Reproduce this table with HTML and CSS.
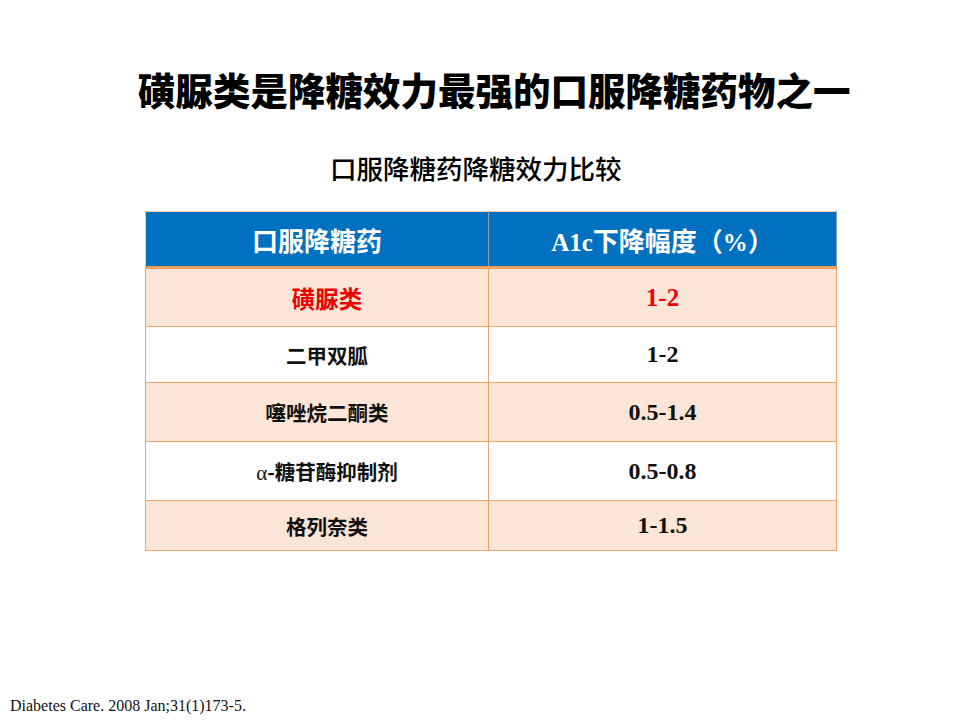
FILE: index.html
```html
<!DOCTYPE html>
<html lang="zh-CN">
<head>
<meta charset="utf-8">
<title>磺脲类是降糖效力最强的口服降糖药物之一</title>
<link rel="stylesheet" href="styles.css">
</head>
<body>
<div class="slide">
  <h1 class="title">磺脲类是降糖效力最强的口服降糖药物之一</h1>
  <h2 class="subtitle">口服降糖药降糖效力比较</h2>
  <table class="cmp">
    <thead>
      <tr class="head">
        <th class="c1">口服降糖药</th>
        <th class="c2"><span class="lat">A1c</span>下降幅度（<span class="lat">%</span>）</th>
      </tr>
    </thead>
    <tbody>
      <tr class="odd r1 hl">
        <td class="cn">磺脲类</td>
        <td class="num">1-2</td>
      </tr>
      <tr class="even r2">
        <td class="cn">二甲双胍</td>
        <td class="num">1-2</td>
      </tr>
      <tr class="odd r3">
        <td class="cn">噻唑烷二酮类</td>
        <td class="num">0.5-1.4</td>
      </tr>
      <tr class="even r4">
        <td class="cn"><span class="alpha">α</span>-糖苷酶抑制剂</td>
        <td class="num">0.5-0.8</td>
      </tr>
      <tr class="odd r5">
        <td class="cn">格列奈类</td>
        <td class="num">1-1.5</td>
      </tr>
    </tbody>
  </table>
  <div class="spacer"></div>
  <p class="ref">Diabetes Care. 2008 Jan;31(1)173-5.</p>
</div>
</body>
</html>
```

FILE: styles.css
```css
html, body {
  margin: 0;
  padding: 0;
  background: #ffffff;
}

.slide {
  width: 960px;
  height: 720px;
  display: flex;
  flex-direction: column;
  box-sizing: border-box;
  padding-top: 69px;
}

.title {
  margin: 0 0 0 138px;
  font-family: "Noto Sans CJK SC", sans-serif;
  font-weight: 900;
  font-size: 37.5px;
  line-height: 40px;
  color: #000000;
  white-space: nowrap;
}

.subtitle {
  margin: 46px 0 0 330px;
  font-family: "Noto Sans CJK SC", sans-serif;
  font-weight: 500;
  font-size: 26.5px;
  line-height: 26px;
  color: #000000;
  white-space: nowrap;
}

.cmp {
  margin: 30px 0 0 145px;
  width: 692px;
  border-collapse: collapse;
  table-layout: fixed;
}

.cmp th,
.cmp td {
  padding: 0;
  text-align: center;
  vertical-align: middle;
  border: 1px solid #f1a46a;
}

.cmp .c1 { width: 342px; }

.head th {
  height: 54px;
  background: #0070c0;
  color: #ffffff;
  font-family: "Noto Sans CJK SC", sans-serif;
  font-weight: 700;
  font-size: 26px;
  border-top-color: #f5c9a6;
  border-left-color: #f5c9a6;
  border-right-color: #8aa0b8;
  border-bottom: 3px solid #f0a05a;
}

.head .lat {
  font-family: "Liberation Serif", serif;
  font-weight: 700;
  font-size: 25px;
}

.odd td { background: #fbe5d6; }
.even td { background: #ffffff; }

.r1 td { height: 57px; }
.r2 td { height: 55px; }
.r3 td { height: 58px; }
.r4 td { height: 58px; }
.r5 td { height: 49px; }

.cmp td.cn {
  padding-left: 20px;
  font-family: "Noto Sans CJK SC", sans-serif;
  font-weight: 700;
  font-size: 20.5px;
  color: #111111;
}

.alpha {
  font-family: "Liberation Serif", serif;
  font-weight: 400;
  font-size: 21px;
}

.num {
  font-family: "Liberation Serif", serif;
  font-weight: 700;
  font-size: 24px;
  color: #111111;
}

.hl td { color: #f00000; }
.cmp .hl td.cn { font-size: 23.5px; color: #f00000; }
.cmp .hl td.num { font-size: 25px; }

.spacer { flex: 1; }

.ref {
  margin: 0 0 6px 10px;
  font-family: "Liberation Serif", serif;
  font-size: 16px;
  line-height: 16px;
  color: #111111;
}
```
